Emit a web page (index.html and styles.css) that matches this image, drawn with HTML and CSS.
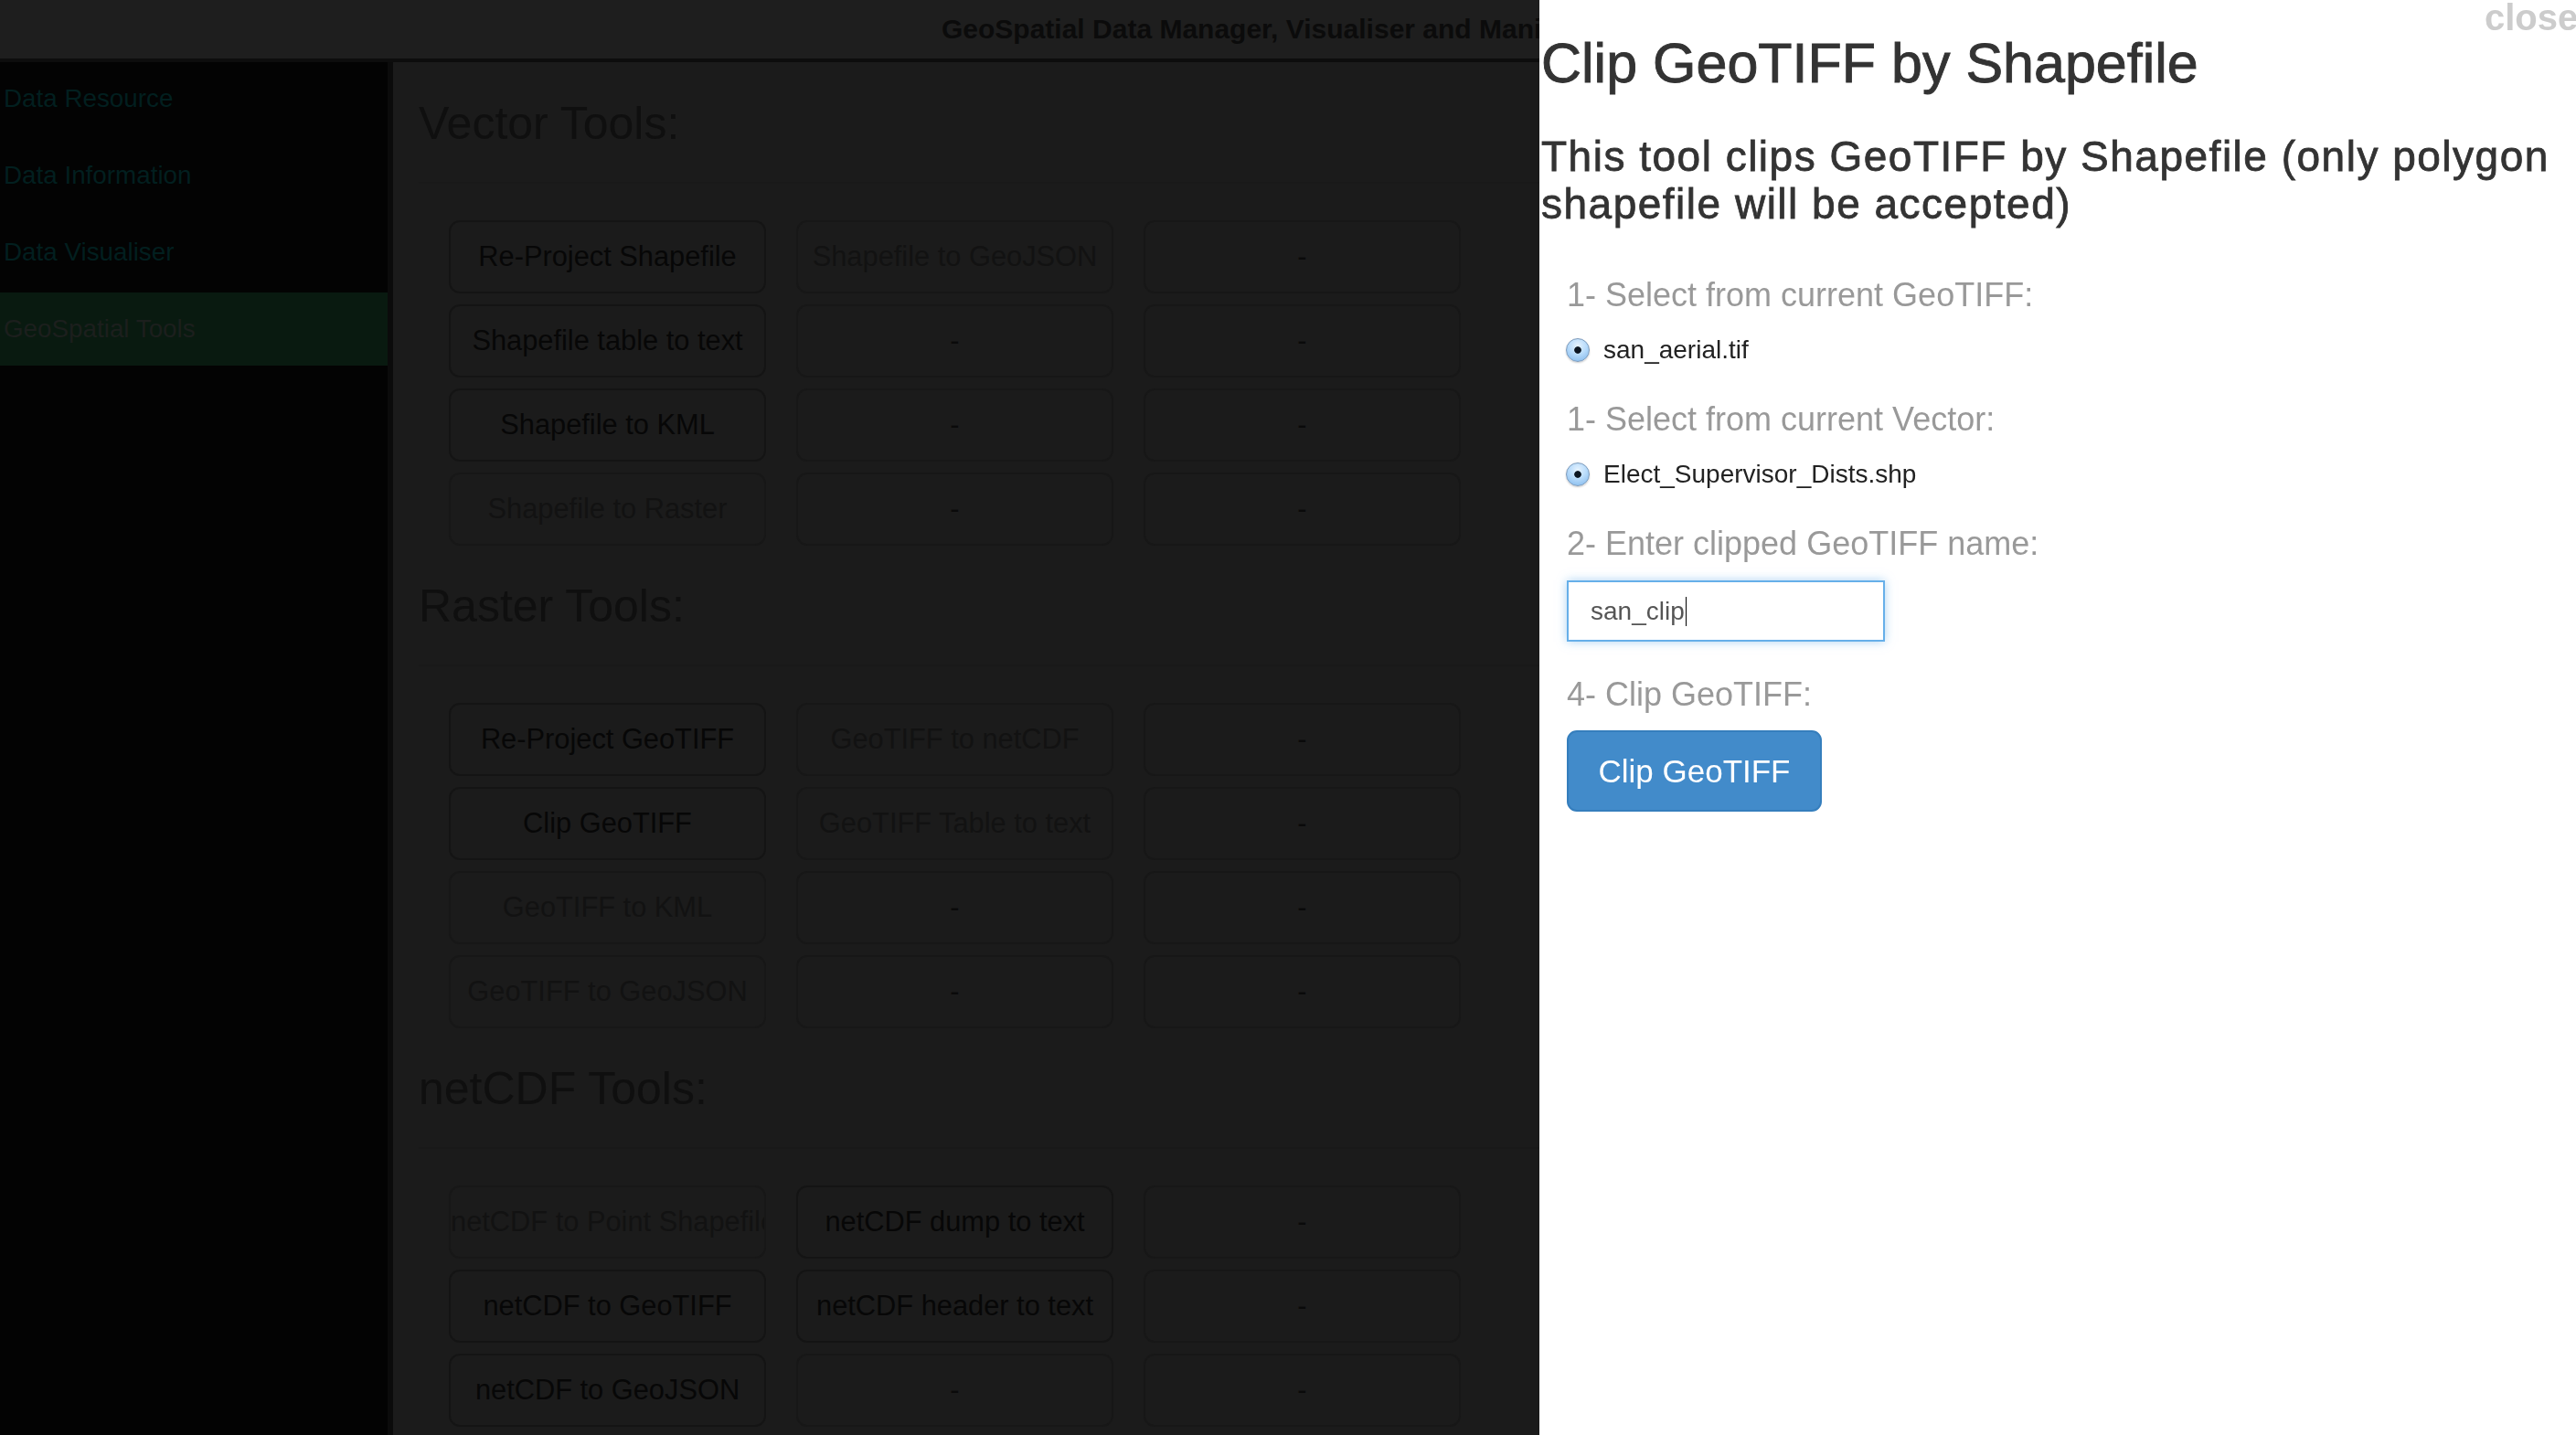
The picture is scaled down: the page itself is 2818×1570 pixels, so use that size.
FILE: index.html
```html
<!DOCTYPE html>
<html lang="en">
<head>
<meta charset="utf-8">
<title>GeoSpatial Data Manager</title>
<link rel="stylesheet" href="styles.css">
</head>
<body>
<header class="topbar">
  <div class="app-title">GeoSpatial Data Manager, Visualiser and Manipulator</div>
</header>
<div class="layout">
  <nav class="sidebar">
    <a class="nav-item">Data Resource</a>
    <a class="nav-item">Data Information</a>
    <a class="nav-item">Data Visualiser</a>
    <a class="nav-item active">GeoSpatial Tools</a>
  </nav>
  <main class="content">
    <section class="tool-group">
      <h2 class="group-title">Vector Tools:</h2>
      <hr class="rule">
      <div class="tool-grid">
        <div class="tool">Re-Project Shapefile</div>
        <div class="tool off">Shapefile to GeoJSON</div>
        <div class="tool off dash">-</div>
        <div class="tool">Shapefile table to text</div>
        <div class="tool off dash">-</div>
        <div class="tool off dash">-</div>
        <div class="tool">Shapefile to KML</div>
        <div class="tool off dash">-</div>
        <div class="tool off dash">-</div>
        <div class="tool off">Shapefile to Raster</div>
        <div class="tool off dash">-</div>
        <div class="tool off dash">-</div>
      </div>
    </section>
    <section class="tool-group">
      <h2 class="group-title">Raster Tools:</h2>
      <hr class="rule">
      <div class="tool-grid">
        <div class="tool">Re-Project GeoTIFF</div>
        <div class="tool off">GeoTIFF to netCDF</div>
        <div class="tool off dash">-</div>
        <div class="tool">Clip GeoTIFF</div>
        <div class="tool off">GeoTIFF Table to text</div>
        <div class="tool off dash">-</div>
        <div class="tool off">GeoTIFF to KML</div>
        <div class="tool off dash">-</div>
        <div class="tool off dash">-</div>
        <div class="tool off">GeoTIFF to GeoJSON</div>
        <div class="tool off dash">-</div>
        <div class="tool off dash">-</div>
      </div>
    </section>
    <section class="tool-group">
      <h2 class="group-title">netCDF Tools:</h2>
      <hr class="rule">
      <div class="tool-grid">
        <div class="tool off">netCDF to Point Shapefile</div>
        <div class="tool">netCDF dump to text</div>
        <div class="tool off dash">-</div>
        <div class="tool">netCDF to GeoTIFF</div>
        <div class="tool">netCDF header to text</div>
        <div class="tool off dash">-</div>
        <div class="tool">netCDF to GeoJSON</div>
        <div class="tool off dash">-</div>
        <div class="tool off dash">-</div>
      </div>
    </section>
  </main>
</div>

<aside class="panel">
  <span class="close">close</span>
  <h1 class="panel-title">Clip GeoTIFF by Shapefile</h1>
  <h3 class="panel-sub">This tool clips GeoTIFF by Shapefile (only polygon shapefile will be accepted)</h3>
  <div class="panel-form">
    <div class="step">1- Select from current GeoTIFF:</div>
    <div class="option"><span class="radio"></span><span>san_aerial.tif</span></div>
    <div class="step">1- Select from current Vector:</div>
    <div class="option"><span class="radio"></span><span>Elect_Supervisor_Dists.shp</span></div>
    <div class="step">2- Enter clipped GeoTIFF name:</div>
    <div class="text-input"><span>san_clip</span><span class="caret"></span></div>
    <div class="step step-last">4- Clip GeoTIFF:</div>
    <div class="btn-primary">Clip GeoTIFF</div>
  </div>
</aside>
</body>
</html>
```

FILE: styles.css
```css
html, body {
  margin: 0;
  padding: 0;
  height: 100%;
  overflow: hidden;
}

body {
  font-family: "Liberation Sans", Arial, Helvetica, sans-serif;
  background: #1b1b1b;
}

.topbar {
  height: 64px;
  background: #1e1e1e;
  border-bottom: 4px solid #0d0d0d;
  display: flex;
  align-items: center;
  justify-content: center;
}

.app-title {
  font-size: 30px;
  font-weight: bold;
  color: #0b0b0b;
  white-space: nowrap;
}

.layout {
  display: flex;
  height: calc(100% - 68px);
}

.sidebar {
  width: 424px;
  flex: none;
  background: #030303;
  border-right: 6px solid #0b0b0b;
  display: flex;
  flex-direction: column;
  gap: 4px;
}

.nav-item {
  height: 80px;
  display: flex;
  align-items: center;
  padding-left: 4px;
  font-size: 27.8px;
  color: #021f1f;
}

.nav-item.active {
  background: #091a10;
  color: #1c1f1d;
}

.content {
  flex: 1;
  background: #1b1b1b;
  padding-left: 28px;
  padding-top: 1px;
}

.group-title {
  margin: 40px 0 0 0;
  font-size: 50px;
  line-height: 52px;
  font-weight: normal;
  color: #0f0f0f;
}

.rule {
  margin: 38px 0 40px 0;
  border: 0;
  border-top: 2px solid #191919;
  height: 0;
}

.tool-grid {
  display: grid;
  grid-template-columns: repeat(3, 347px);
  column-gap: 33px;
  row-gap: 12px;
  padding-left: 33px;
}

.tool {
  box-sizing: border-box;
  height: 80px;
  border: 2px solid #141414;
  border-radius: 12px;
  text-align: center;
  line-height: 76px;
  overflow: hidden;
  white-space: nowrap;
  font-size: 30.8px;
  color: #070707;
}

.tool.off {
  border-color: #171717;
  color: #121212;
}

.tool.dash {
  color: #0a0a0a;
}

/* Right side modal panel */
.panel {
  position: fixed;
  top: 0;
  right: 0;
  width: 1134px;
  height: 100%;
  background: #ffffff;
  box-sizing: border-box;
  padding-left: 2px;
}

.close {
  position: absolute;
  top: 0;
  left: 1034px;
  font-size: 40px;
  line-height: 38px;
  font-weight: bold;
  color: #cccccc;
}

.panel-title {
  margin: 37px 0 0 0;
  font-size: 61px;
  line-height: 64px;
  font-weight: normal;
  -webkit-text-stroke: 0.9px #333333;
  color: #333333;
}

.panel-sub {
  margin: 44px 0 0 0;
  font-size: 46px;
  line-height: 52px;
  letter-spacing: 1.5px;
  font-weight: normal;
  -webkit-text-stroke: 0.8px #333333;
  color: #333333;
  padding-right: 20px;
}

.panel-form {
  padding-left: 28px;
  padding-top: 54px;
}

.step {
  font-size: 36px;
  line-height: 40px;
  color: #999999;
}

.option {
  display: flex;
  align-items: center;
  height: 32px;
  margin: 24px 0 40px 0;
  font-size: 28px;
  color: #222222;
}

.radio {
  box-sizing: border-box;
  width: 26px;
  height: 26px;
  margin-left: -1px;
  margin-right: 15px;
  border-radius: 50%;
  border: 1px solid #7c9abb;
  background:
    radial-gradient(circle at 50% 50%, #0c1622 0 3.4px, transparent 4.2px),
    radial-gradient(circle at 50% 30%, #e6f3ff 0, #b9dcfb 45%, #7db5ea 100%);
  box-shadow: 0 1px 2px rgba(0, 0, 0, 0.2);
  flex: none;
}

.text-input {
  box-sizing: border-box;
  width: 348px;
  height: 67px;
  margin: 20px 0 38px 0;
  border: 2px solid #66afe9;
  box-shadow: 0 0 10px rgba(102, 175, 233, 0.55);
  display: flex;
  align-items: center;
  padding-left: 24px;
  font-size: 28px;
  color: #555555;
}

.caret {
  display: inline-block;
  width: 1px;
  height: 32px;
  margin-left: 1px;
  background: #000000;
}

.step-last {
  margin-bottom: 19px;
}

.btn-primary {
  box-sizing: border-box;
  width: 279px;
  height: 89px;
  background: #428bca;
  border: 2px solid #357ebd;
  border-radius: 11px;
  color: #ffffff;
  font-size: 35px;
  display: flex;
  align-items: center;
  justify-content: center;
}
```
